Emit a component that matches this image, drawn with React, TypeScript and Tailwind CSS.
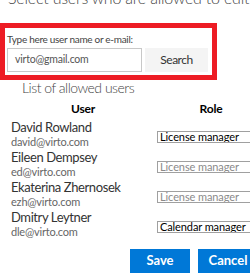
import React from "react";

const users = [
  { name: "David Rowland", email: "david@virto.com", role: "License manager", disabled: false },
  { name: "Eileen Dempsey", email: "ed@virto.com", role: "License manager", disabled: true },
  { name: "Ekaterina Zhernosek", email: "ezh@virto.com", role: "License manager", disabled: true },
  { name: "Dmitry Leytner", email: "dle@virto.com", role: "Calendar manager", disabled: false },
];

export default function App() {
  return (
    <div
      className="w-[250px] h-[275px] overflow-hidden bg-white text-[#333]"
      style={{ fontFamily: 'Lato, "Open Sans", sans-serif' }}
    >
      <div className="-mt-[12px] h-[20px] pl-[8px] whitespace-nowrap text-[16px] leading-[20px] font-light tracking-[-0.2px] text-[#444]">
        Select users who are allowed to edit this
      </div>
      <div className="mt-[15px] w-[217px] h-[57px] border-[5px] border-[#ed1c24] px-[2px] pt-[5px]">
        <div className="text-[10px] leading-[12px] tracking-[-0.3px] text-[#444] whitespace-nowrap">
          Type here user name or e-mail:
        </div>
        <div className="mt-[3px] flex gap-[3px]">
          <div className="w-[135px] h-[24px] border border-[#c8c8c8] flex items-center pl-[7px] text-[10.5px] tracking-[-0.2px] text-[#555]">
            virto@gmail.com
          </div>
          <div className="w-[63px] h-[24px] bg-[#f4f4f4] flex items-center justify-center text-[12px] tracking-[-0.5px] text-[#333]">
            Search
          </div>
        </div>
      </div>
      <div className="pl-[22px] text-[14px] leading-[16px] font-light tracking-[-0.5px] text-[#444] whitespace-nowrap">
        List of allowed users
      </div>
      <div className="mt-[4px] flex text-[12px] leading-[18px] font-bold tracking-[-0.2px] text-black">
        <div className="w-[166px] shrink-0 text-center">User</div>
        <div className="w-[90px] shrink-0 text-center">Role</div>
      </div>
      <div className="mt-[1px] flex flex-col">
        {users.map((u) => (
          <div key={u.email} className="flex h-[30px]">
            <div className="w-[157px] shrink-0 pl-[11px] flex flex-col">
              <div className="text-[13px] leading-[16px] tracking-[-0.4px] text-[#333] whitespace-nowrap">{u.name}</div>
              <div className="text-[11px] leading-[14px] tracking-[-0.2px] text-[#666] whitespace-nowrap">{u.email}</div>
            </div>
            <div className="flex items-center pt-[5px]">
              <div
                className={`w-[100px] h-[12px] border border-[#a0a0a0] pl-[2px] text-[11px] leading-[10px] tracking-[-0.1px] whitespace-nowrap overflow-hidden ${
                  u.disabled ? "text-[#8a8a8a]" : "text-black"
                }`}
              >
                {u.role}
              </div>
            </div>
          </div>
        ))}
      </div>
      <div className="mt-[10px] flex gap-[8px] pl-[130px]">
        <div className="w-[60px] h-[24px] shrink-0 bg-[#0078d7] text-white text-[13px] font-bold flex items-center justify-center">
          Save
        </div>
        <div className="w-[60px] h-[24px] shrink-0 bg-[#0078d7] text-white text-[13px] font-bold flex items-center justify-center">
          Cancel
        </div>
      </div>
    </div>
  );
}
